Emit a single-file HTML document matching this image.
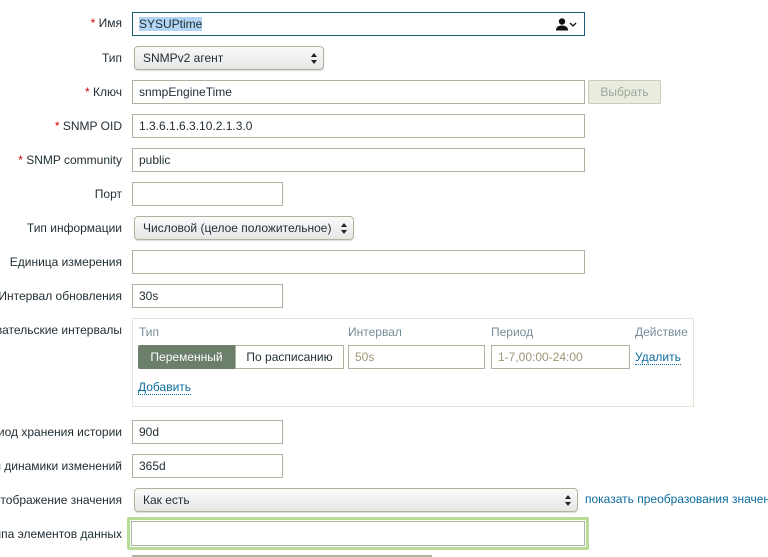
<!DOCTYPE html>
<html style="overflow:hidden;width:768px;height:557px"><head><meta charset="utf-8"><style>
body{margin:0;width:768px;height:557px;overflow:hidden;background:#fff;font-family:"Liberation Sans",Arial,sans-serif;font-size:12px;color:#1f2c33;position:relative}
.l{position:absolute;right:646px;white-space:nowrap;text-align:right}
.r{color:#d40000}
.i{position:absolute;box-sizing:border-box;border:1px solid #aab59f;background:#fff;height:24px;padding-left:6px;line-height:22px;white-space:nowrap}
.s{position:absolute;box-sizing:border-box;border:1px solid #aab59f;border-radius:4px;background:linear-gradient(#fafafa,#e6e6e6);height:24px;padding-left:8px;line-height:22px;box-shadow:0 1px 1px rgba(0,0,0,.15)}
.s:after{content:"";position:absolute;right:6px;top:6px;width:0;height:0;border-left:3px solid transparent;border-right:3px solid transparent;border-bottom:4px solid #222}
.s:before{content:"";position:absolute;right:6px;top:13px;width:0;height:0;border-left:3px solid transparent;border-right:3px solid transparent;border-top:4px solid #222}
a{color:#0b6b9c;text-decoration:none;border-bottom:1px dotted #0b6b9c}
.h{position:absolute;color:#768d99;top:325px}
</style></head><body>
<div class="l" style="top:16px"><span class="r">*</span> Имя</div>
<div class="i" style="left:132px;top:12px;width:453px;border-color:#1f5c7a"><span style="background:#b3d5f5">SYSUPtime</span>
<svg style="position:absolute;right:6px;top:5px" width="22" height="13" viewBox="0 0 22 13"><circle cx="6" cy="3.5" r="3.2" fill="#111"/><path d="M0 12.5 Q0 7.5 6 7.5 Q12 7.5 12 12.5Z" fill="#111"/><path d="M14 5l3 3 3-3" stroke="#111" stroke-width="1.3" fill="none"/></svg></div>
<div class="l" style="top:51px">Тип</div>
<div class="s" style="left:134px;top:46px;width:190px">SNMPv2 агент</div>
<div class="l" style="top:85px"><span class="r">*</span> Ключ</div>
<div class="i" style="left:132px;top:80px;width:453px">snmpEngineTime</div>
<div style="position:absolute;left:588px;top:80px;width:73px;height:24px;box-sizing:border-box;border:1px solid #c7cfb9;border-radius:2px;background:#e9ecdf;color:#9da79a;text-align:center;line-height:22px">Выбрать</div>
<div class="l" style="top:119px"><span class="r">*</span> SNMP OID</div>
<div class="i" style="left:132px;top:114px;width:453px">1.3.6.1.6.3.10.2.1.3.0</div>
<div class="l" style="top:153px"><span class="r">*</span> SNMP community</div>
<div class="i" style="left:132px;top:148px;width:453px">public</div>
<div class="l" style="top:187px">Порт</div>
<div class="i" style="left:132px;top:182px;width:151px"></div>
<div class="l" style="top:221px">Тип информации</div>
<div class="s" style="left:134px;top:216px;width:220px">Числовой (целое положительное)</div>
<div class="l" style="top:255px">Единица измерения</div>
<div class="i" style="left:132px;top:250px;width:453px"></div>
<div class="l" style="top:289px">Интервал обновления</div>
<div class="i" style="left:132px;top:284px;width:151px">30s</div>
<div class="l" style="top:323px">Пользовательские интервалы</div>
<div style="position:absolute;left:132px;top:318px;width:562px;height:89px;box-sizing:border-box;border:1px solid #e2e6d8"></div>
<div class="h" style="left:139px">Тип</div>
<div class="h" style="left:348px">Интервал</div>
<div class="h" style="left:491px">Период</div>
<div class="h" style="left:635px">Действие</div>
<div style="position:absolute;left:138px;top:345px;width:97px;height:24px;background:#6c7f6a;color:#fff;text-align:center;line-height:24px;border-radius:2px 0 0 2px">Переменный</div>
<div style="position:absolute;left:235px;top:345px;width:109px;height:24px;box-sizing:border-box;border:1px solid #aab59f;text-align:center;line-height:22px">По расписанию</div>
<div class="i" style="left:348px;top:345px;width:137px;color:#9d9374">50s</div>
<div class="i" style="left:491px;top:345px;width:139px;color:#9d9374">1-7,00:00-24:00</div>
<div style="position:absolute;left:635px;top:350px"><a>Удалить</a></div>
<div style="position:absolute;left:138px;top:380px"><a>Добавить</a></div>
<div class="l" style="top:425px">Период хранения истории</div>
<div class="i" style="left:132px;top:420px;width:151px">90d</div>
<div class="l" style="top:459px">Период хранения динамики изменений</div>
<div class="i" style="left:132px;top:454px;width:151px">365d</div>
<div class="l" style="top:493px">Отображение значения</div>
<div class="s" style="left:134px;top:488px;width:444px">Как есть</div>
<div style="position:absolute;left:585px;top:492px;width:183px;overflow:hidden;white-space:nowrap;color:#0b6b9c">показать преобразования значений</div>
<div class="l" style="top:527px">Группа элементов данных</div>
<div style="position:absolute;left:127px;top:517px;width:462px;height:33px;box-sizing:border-box;border:3px solid #b8dc95;border-radius:2px"></div>
<div class="i" style="left:131px;top:521px;width:454px;height:25px;border-color:#aab59f"></div>
<div style="position:absolute;left:132px;top:555px;width:300px;height:2px;background:#aab59f"></div>
</body></html>
